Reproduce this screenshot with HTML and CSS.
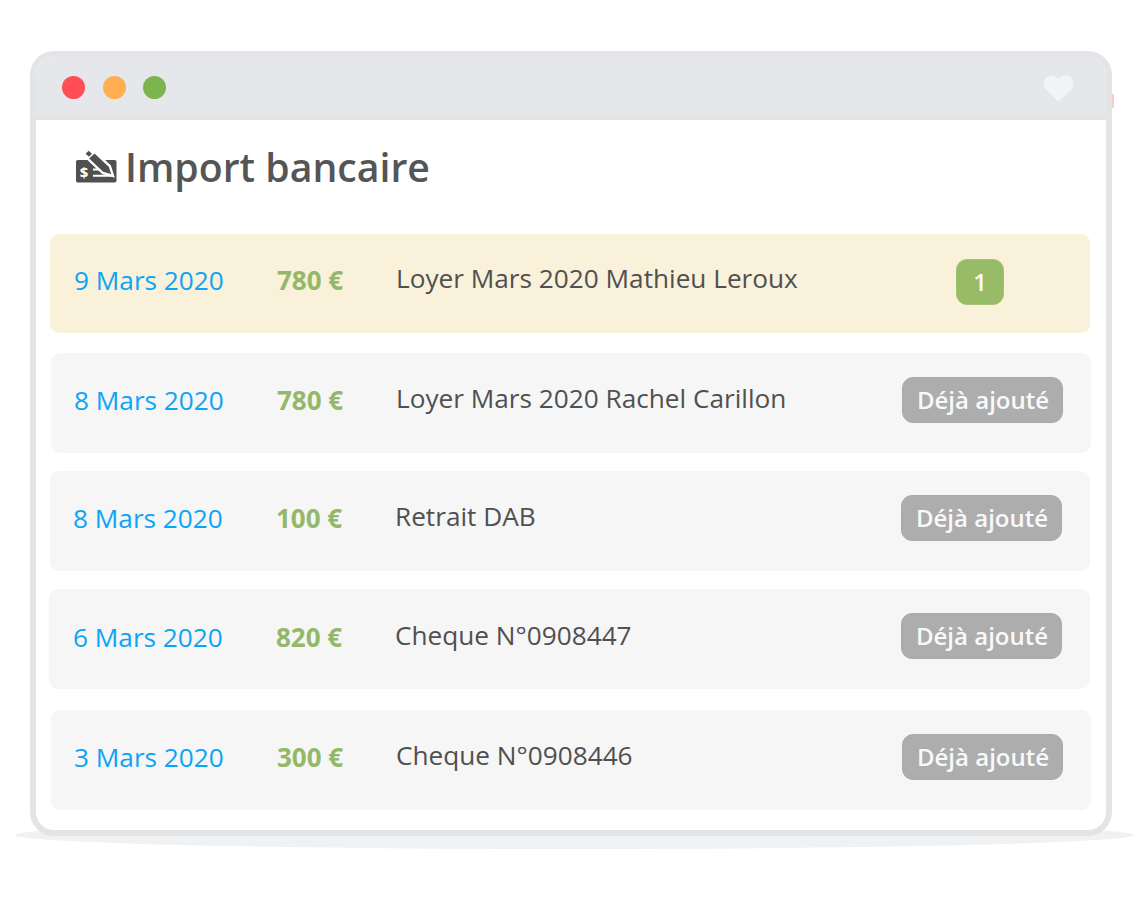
FILE: index.html
```html
<!DOCTYPE html>
<html lang="fr">
<head>
<meta charset="utf-8">
<title>Import bancaire</title>
<link rel="stylesheet" href="styles.css">
</head>
<body>
<div class="stage">
  <div class="floor"></div>
  <div class="tick"></div>
  <main class="window">
    <header class="titlebar">
      <div class="dots">
        <span class="dot red"></span>
        <span class="dot orange"></span>
        <span class="dot green"></span>
      </div>
      <svg class="heart" viewBox="0 0 32 28" aria-hidden="true"><path d="M16 27.500 3.400 15.600C-.6 11.600-.2 5.400 3.600 2.300 7.400-.8 12.800.2 16 4.600 19.200.2 24.600-.8 28.400 2.300 32.200 5.400 32.600 11.600 28.600 15.600Z"/></svg>
    </header>
    <section class="content">
      <h1 class="heading">
        <svg class="cheque" viewBox="0 0 41 34" aria-hidden="true">
          <rect class="fill" x="0" y="10" width="40.500" height="22.500" rx="1.800"/>
          <path class="pencil" d="M11.500 8.500 18.500 1.800 33.800 16 37 26 26.800 23Z"/>
          <path class="fill" d="M9.600 3.800 12.600 .8 16 3.800 13 6.800Z"/>
          <path class="cut" d="M17 19.500H23.500M17 25.800H38"/>
          <text class="dollar" x="8" y="28" text-anchor="middle">$</text>
        </svg>
        <span>Import bancaire</span>
      </h1>
      <div class="rows">
        <article class="row current">
          <span class="date">9 Mars 2020</span>
          <span class="amount">780 €</span>
          <span class="label">Loyer Mars 2020 Mathieu Leroux</span>
          <span class="badge count">1</span>
        </article>
        <article class="row nudged right">
          <span class="date">8 Mars 2020</span>
          <span class="amount">780 €</span>
          <span class="label">Loyer Mars 2020 Rachel Carillon</span>
          <span class="badge">Déjà ajouté</span>
        </article>
        <article class="row nudged">
          <span class="date">8 Mars 2020</span>
          <span class="amount">100 €</span>
          <span class="label">Retrait DAB</span>
          <span class="badge">Déjà ajouté</span>
        </article>
        <article class="row wide">
          <span class="date">6 Mars 2020</span>
          <span class="amount">820 €</span>
          <span class="label">Cheque N°0908447</span>
          <span class="badge">Déjà ajouté</span>
        </article>
        <article class="row nudged right">
          <span class="date">3 Mars 2020</span>
          <span class="amount">300 €</span>
          <span class="label">Cheque N°0908446</span>
          <span class="badge">Déjà ajouté</span>
        </article>
      </div>
    </section>
  </main>
</div>
</body>
</html>
```
FILE: styles.css
```css
* { box-sizing: border-box; }
html, body { margin: 0; background: #fff; }
body { font-family: "Open Sans", "Liberation Sans", sans-serif; overflow: hidden; }

.stage { position: relative; width: 1140px; height: 900px; padding: 51px 28px 0 30px; }

.floor {
  position: absolute; left: 15px; top: 821px; width: 1119px; height: 28px;
  background: #f0f1f3; border-radius: 50%;
}
.tick { position: absolute; left: 1112px; top: 94px; width: 2px; height: 14px; background: #ffc9c9; }

.window {
  position: relative; width: 1082px; height: 785px;
  background: #fff; border: 6px solid #e3e4e6; border-top-width: 5px; border-radius: 24px;
  overflow: hidden;
}

.titlebar {
  height: 64px; background: #e6e7ea;
  border-bottom: 5px solid #e3e4e6; display: flex; align-items: center; justify-content: space-between;
  padding: 4px 32px 0 26px;
}
.dots { display: flex; gap: 17.500px; }
.dot { width: 23px; height: 23px; border-radius: 50%; }
.red { background: #ff4e55; }
.orange { background: #ffae52; }
.green { background: #7cb44f; }
.heart { width: 31px; height: 27px; margin-top: 1px; }
.heart path { fill: #f3f4f6; }

.content { padding: 0 14px; }

.heading {
  display: flex; align-items: center; gap: 8px;
  height: 96px; margin: 0; padding: 0 0 2px 26px;
  font-size: 39.200px; font-weight: 600; color: #555; line-height: 1;
}
.cheque { width: 41px; height: 34px; margin-bottom: 1px; flex: none; overflow: visible; }
.cheque .fill { fill: #505050; }
.cheque .pencil { fill: #505050; stroke: #fff; stroke-width: 2.400; stroke-linejoin: miter; }
.cheque .cut { fill: none; stroke: #fff; stroke-width: 2; }
.dollar { font-size: 15px; font-weight: 700; fill: #fff; font-family: "Open Sans", "Liberation Sans", sans-serif; }

.rows { display: flex; flex-direction: column; margin-top: 18px; }
.row {
  display: flex; align-items: center; width: 1040px; height: 100px;
  background: #f6f6f6; border-radius: 9px; margin-bottom: 18px;
  padding: 0 27px 8px 24px;
}
.row:nth-child(1) { height: 99px; margin-bottom: 20px; padding-bottom: 10px; }
.row:nth-child(4) { margin-bottom: 21px; }
.current { background: #f9f1da; }
.nudged { padding-left: 23px; padding-right: 28px; }
.right { margin-left: 1px; }
.wide { width: 1041px; margin-left: -1px; padding-right: 28px; padding-bottom: 6px; }

.date { width: 203px; font-size: 26.200px; color: #0ca4f5; padding-top: 2px; white-space: nowrap; }
.amount { width: 119px; font-size: 26px; font-weight: 700; color: #93b869; padding-top: 2px; white-space: nowrap; }
.label { flex: 1; font-size: 26.200px; color: #505050; white-space: nowrap; padding-bottom: 2px; }

.badge {
  display: flex; align-items: center; justify-content: center;
  width: 161px; height: 46px; border-radius: 11px; padding: 0 0 1px 1px;
  background: #adadad; color: #f9f9f9; font-size: 24px; font-weight: 600; white-space: nowrap;
  border: 1px solid #a9a9a9; margin-top: 2px;
}
.wide .badge { margin-top: 0; }
.count {
  width: 48px; background: #98bb67; border-color: #a3c276;
  margin-right: 59px; margin-top: 6px; padding-left: 0;
}
```
